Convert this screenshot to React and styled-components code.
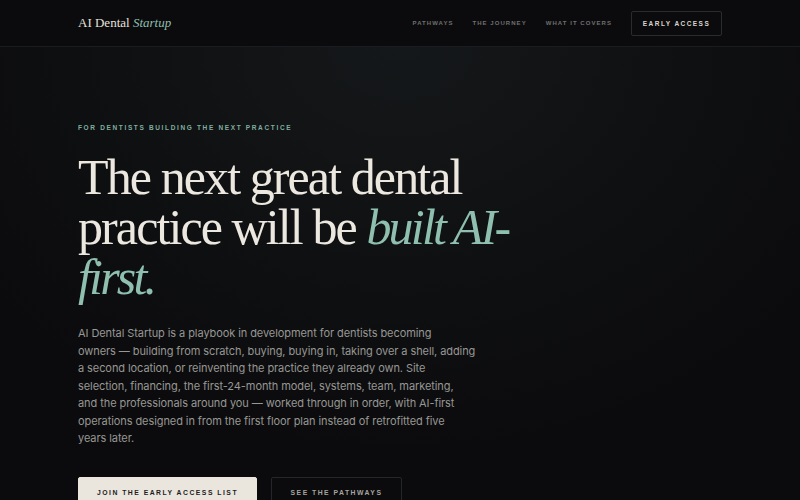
import React from "react";
import styled, { createGlobalStyle } from "styled-components";

const GlobalStyle = createGlobalStyle`
  html, body {
    margin: 0;
    padding: 0;
    background: #0b0b0d;
  }
  * { box-sizing: border-box; }
`;

const Page = styled.div`
  width: 100%;
  min-height: 100vh;
  overflow: hidden;
  background: radial-gradient(ellipse 520px 420px at 400px 40px, #15181a 0%, #0f1012 55%, #0b0b0d 100%);
  font-family: "Liberation Sans", Arial, sans-serif;
`;

const Header = styled.header`
  height: 47px;
  padding: 0 78px;
  display: flex;
  align-items: center;
  justify-content: space-between;
  background: #0b0b0d;
  border-bottom: 1px solid #1b1c1f;
`;

const Logo = styled.div`
  font-family: "Liberation Serif", "Times New Roman", serif;
  font-size: 13px;
  color: #e6e2da;
  em {
    color: #8fbfae;
  }
`;

const Nav = styled.nav`
  display: flex;
  align-items: center;
  gap: 19px;
`;

const NavLink = styled.a`
  font-size: 6px;
  font-weight: 700;
  letter-spacing: 1.05px;
  color: #6f706f;
  text-transform: uppercase;
  text-decoration: none;
`;

const NavButton = styled.a`
  height: 25px;
  width: 91px;
  display: flex;
  align-items: center;
  justify-content: center;
  border: 1px solid #2a2b2e;
  border-radius: 2px;
  font-size: 6.5px;
  font-weight: 700;
  letter-spacing: 1.45px;
  color: #d9d5cd;
  text-decoration: none;
`;

const Hero = styled.main`
  padding: 77px 78px 0;
`;

const Eyebrow = styled.div`
  font-size: 6.5px;
  font-weight: 700;
  letter-spacing: 1.65px;
  color: #7fae9f;
  text-transform: uppercase;
`;

const Title = styled.h1`
  margin: 21px 0 0;
  max-width: 440px;
  font-family: "Liberation Serif", "Times New Roman", serif;
  font-weight: 400;
  font-size: 50px;
  line-height: 50px;
  letter-spacing: -1.9px;
  color: #ece8e0;
  em {
    color: #8fbfae;
    letter-spacing: -2.8px;
  }
`;

const Lede = styled.p`
  margin: 23px 0 0;
  font-family: Inter, "Liberation Sans", sans-serif;
  font-size: 11px;
  letter-spacing: -0.08px;
  line-height: 17.5px;
  color: #979793;
  white-space: nowrap;
`;

const Actions = styled.div`
  margin-top: 29px;
  display: flex;
  gap: 14px;
`;

const Button = styled.a`
  height: 46px;
  width: ${(p) => (p.$primary ? "179px" : "131px")};
  padding-top: 11px;
  display: flex;
  justify-content: center;
  border: 1px solid ${(p) => (p.$primary ? "#ebe6dd" : "#25262a")};
  border-radius: 2px;
  background: ${(p) => (p.$primary ? "#ebe6dd" : "transparent")};
  color: ${(p) => (p.$primary ? "#1d1d1d" : "#a7a59f")};
  font-size: 6.8px;
  font-weight: 700;
  letter-spacing: 1.5px;
  white-space: nowrap;
  text-transform: uppercase;
  text-decoration: none;
`;

export default function App() {
  return (
    <>
      <GlobalStyle />
      <Page>
        <Header>
          <Logo>
            AI Dental <em>Startup</em>
          </Logo>
          <Nav>
            <NavLink href="#">Pathways</NavLink>
            <NavLink href="#">The Journey</NavLink>
            <NavLink href="#">What It Covers</NavLink>
            <NavButton href="#">EARLY ACCESS</NavButton>
          </Nav>
        </Header>
        <Hero>
          <Eyebrow>For dentists building the next practice</Eyebrow>
          <Title>
            The next great dental practice will be <em>built AI-first.</em>
          </Title>
          <Lede>
            AI Dental Startup is a playbook in development for dentists becoming
            <br />
            owners — building from scratch, buying, buying in, taking over a shell, adding
            <br />
            a second location, or reinventing the practice they already own. Site
            <br />
            selection, financing, the first-24-month model, systems, team, marketing,
            <br />
            and the professionals around you — worked through in order, with AI-first
            <br />
            operations designed in from the first floor plan instead of retrofitted five
            <br />
            years later.
          </Lede>
          <Actions>
            <Button href="#" $primary>
              Join the early access list
            </Button>
            <Button href="#">See the pathways</Button>
          </Actions>
        </Hero>
      </Page>
    </>
  );
}
